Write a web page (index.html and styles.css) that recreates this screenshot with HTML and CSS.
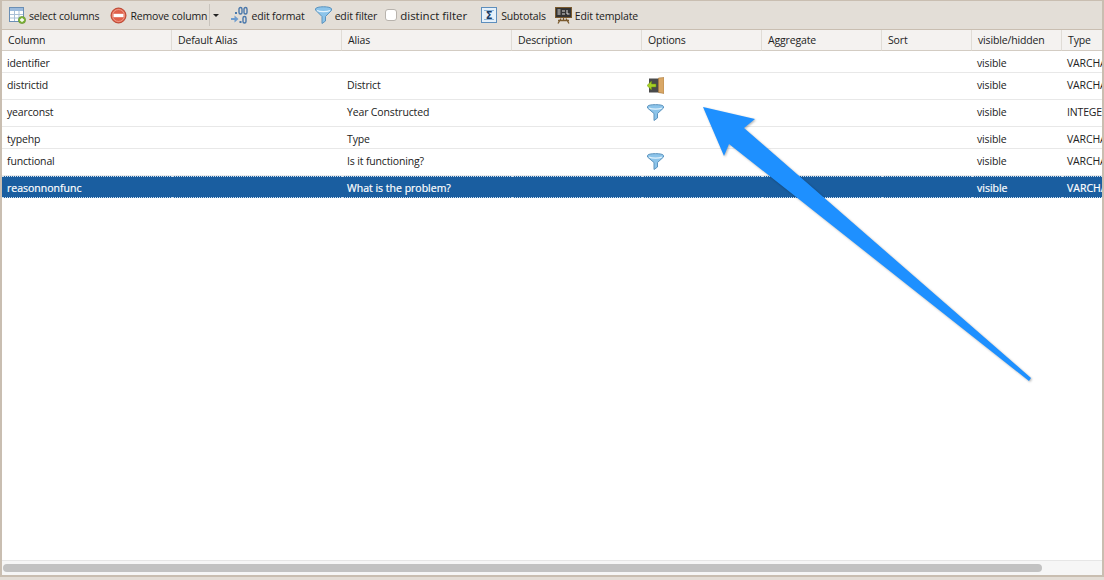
FILE: index.html
```html
<!DOCTYPE html>
<html lang="en">
<head>
    <meta charset="UTF-8">
    <title>Columns</title>
    <link rel="stylesheet" href="styles.css">
</head>
<body>

    <div class="frame">
        <div class="toolbar">
            <span class="tool tool-first">
                <svg class="icon" width="17" height="17" viewBox="0 0 17 17">
                    <rect x=".5" y=".5" width="14" height="14" fill="#fff" stroke="#6b8fb5"/>
                    <rect x="1" y="1" width="13" height="3" fill="#9dbbdc"/>
                    <path d="M1 7.500h13M1 11h13M5.500 4v10M10 4v10" stroke="#a9bfd6" fill="none"/>
                    <circle cx="13" cy="13" r="3.600" fill="#7fb53c" stroke="#5b8a22" stroke-width=".6"/>
                    <path d="M11 13h4M13 11v4" stroke="#fff" stroke-width="1.300"/>
                </svg>
                select columns
            </span>
            <span class="tool tool-remove">
                <svg class="icon" width="17" height="17" viewBox="0 0 17 17">
                    <circle cx="8.500" cy="8.500" r="7.500" fill="#e0604a" stroke="#b9442f"/>
                    <circle cx="8.500" cy="8.500" r="6" fill="none" stroke="#f0a898" stroke-width=".8"/>
                    <rect x="3.500" y="6.800" width="10" height="3.400" fill="#fff"/>
                </svg>
                Remove column
            </span>
            <span class="tool-split"><span class="caret"></span></span>
            <span class="tool tool-format">
                <svg class="icon" width="17" height="18" viewBox="0 0 17 18">
                    <rect x="8" y="1.500" width="3" height="6.500" rx="1.500" fill="none" stroke="#4a78ab" stroke-width="1.400"/>
                    <rect x="13" y="1.500" width="3" height="6.500" rx="1.500" fill="none" stroke="#4a78ab" stroke-width="1.400"/>
                    <rect x="12" y="10.500" width="3" height="6.500" rx="1.500" fill="none" stroke="#4a78ab" stroke-width="1.400"/>
                    <rect x="4" y="6" width="2" height="2" fill="#4a78ab"/>
                    <rect x="8.500" y="15" width="2" height="2" fill="#4a78ab"/>
                    <path d="M0 12h3.500V9.500l4 3.500-4 3.500V14H0z" fill="#6d9ccf"/>
                </svg>
                edit format
            </span>
            <span class="tool tool-filter">
                <svg class="icon" width="17" height="18" viewBox="0 0 17 18">
                    <path d="M.5 3c0-3 16-3 16 0v1.500l-6 6v4.500l-3.500 2.500v-7l-6.500-6.500z" fill="#8cc4ea" stroke="#5c93bd"/>
                    <path d="M2 4.500c3 1.500 10 1.500 13 0" stroke="#e4f3fc" stroke-width="1.200" fill="none"/>
                </svg>
                edit filter
            </span>
            <label class="tool tool-distinct"><span class="checkbox"></span>distinct filter</label>
            <span class="tool tool-subtotals">
                <svg class="icon" width="16" height="16" viewBox="0 0 16 16">
                    <rect x=".5" y=".5" width="15" height="15" fill="#e6f1fa" stroke="#5e8fbd"/>
                    <path d="M3 3.500h10M3 12.500h10" stroke="#8fb4d6"/>
                    <text class="sigma" x="8" y="11.500" text-anchor="middle">Σ</text>
                </svg>
                Subtotals
            </span>
            <span class="tool">
                <svg class="icon" width="17" height="17" viewBox="0 0 17 17">
                    <rect x=".5" y=".5" width="16" height="10" fill="#333" stroke="#7a5a2e"/>
                    <path d="M2.500 3h3M2.500 5h3M2.500 7h3M7 4h3M7 7h3M12 3v4h2.500" stroke="#eee" fill="none" stroke-width=".9"/>
                    <path d="M8.500 11v2M3 16.500l3-5M14 16.500l-3-5M3 13.500h11" stroke="#7a5a2e" fill="none" stroke-width="1.300"/>
                </svg>
                Edit template
            </span>
        </div>

        <div class="grid-area">
            <table class="columns">
                <colgroup>
                    <col class="w170"><col class="w170"><col class="w170"><col class="w130"><col class="w120"><col class="w120"><col class="w90"><col class="w90"><col class="w90">
                </colgroup>
                <thead>
                    <tr>
                        <th>Column</th><th>Default Alias</th><th>Alias</th><th>Description</th><th>Options</th><th>Aggregate</th><th>Sort</th><th>visible/hidden</th><th>Type</th>
                    </tr>
                </thead>
                <tbody>
                    <tr class="row-short">
                        <td>identifier</td><td></td><td></td><td></td><td></td><td></td><td></td><td>visible</td><td>VARCHAR</td>
                    </tr>
                    <tr class="row-tall">
                        <td>districtid</td><td></td><td>District</td><td></td>
                        <td class="cell-icon">
                            <svg width="17" height="17" viewBox="0 0 17 17">
                                <rect x="2" y="1.500" width="12" height="14" fill="#4a4a4a"/>
                                <path d="M11.500 1l5.500-.500V16.500l-5.500-1z" fill="#d9a766" stroke="#a87a3e" stroke-width=".6"/>
                                <path d="M0 8.500l4.500-4.500v3H9v3H4.500v3z" fill="#a6d024" stroke="#6b8f10" stroke-width=".5"/>
                            </svg>
                        </td>
                        <td></td><td></td><td>visible</td><td>VARCHAR</td>
                    </tr>
                    <tr class="row-tall">
                        <td>yearconst</td><td></td><td>Year Constructed</td><td></td>
                        <td class="cell-icon">
                            <svg width="17" height="17" viewBox="0 0 17 17">
                                <path d="M.5 2.500c0-2.500 16-2.500 16 0v1.500l-6 5.500v4.500l-3.500 2.500v-7L.5 4z" fill="#8cc4ea" stroke="#5c93bd"/>
                                <path d="M2 4c3 1.500 10 1.500 13 0" stroke="#e4f3fc" stroke-width="1.200" fill="none"/>
                            </svg>
                        </td>
                        <td></td><td></td><td>visible</td><td>INTEGER</td>
                    </tr>
                    <tr class="row-short">
                        <td>typehp</td><td></td><td>Type</td><td></td><td></td><td></td><td></td><td>visible</td><td>VARCHAR</td>
                    </tr>
                    <tr class="row-tall">
                        <td>functional</td><td></td><td>Is it functioning?</td><td></td>
                        <td class="cell-icon">
                            <svg width="17" height="17" viewBox="0 0 17 17">
                                <path d="M.5 2.500c0-2.500 16-2.500 16 0v1.500l-6 5.500v4.500l-3.500 2.500v-7L.5 4z" fill="#8cc4ea" stroke="#5c93bd"/>
                                <path d="M2 4c3 1.500 10 1.500 13 0" stroke="#e4f3fc" stroke-width="1.200" fill="none"/>
                            </svg>
                        </td>
                        <td></td><td></td><td>visible</td><td>VARCHAR</td>
                    </tr>
                    <tr class="row-selected">
                        <td>reasonnonfunc</td><td></td><td>What is the problem?</td><td></td><td></td><td></td><td></td><td>visible</td><td>VARCHAR</td>
                    </tr>
                </tbody>
            </table>
        </div>

        <div class="scrollbar"><div class="scroll-thumb"></div></div>
    </div>

    <svg class="arrow" width="1104" height="580" viewBox="0 0 1104 580">
        <path d="M703 107L755 119L744 128L1031 378L1029 381L729 144L724 156Z" fill="#1e90ff"/>
    </svg>

</body>
</html>
```

FILE: styles.css
```css
html, body {
    margin: 0;
    padding: 0;
}

body {
    width: 1104px;
    height: 580px;
    overflow: hidden;
    position: relative;
    background-color: #fff;
    color: #222;
    font-family: "Open Sans", "Liberation Sans", sans-serif;
    font-size: 10.5px;
    letter-spacing: -.15px;
}

.frame {
    box-sizing: border-box;
    height: 577px;
    display: flex;
    flex-direction: column;
    border-left: 2px solid #c9beb1;
    border-right: 2px solid #c9beb1;
    border-top: 1px solid #c9beb1;
    border-bottom: 2px solid #c9beb1;
    box-shadow: 0 3px 0 #e3ddd6;
}

.toolbar {
    box-sizing: border-box;
    height: 29px;
    flex: none;
    display: flex;
    align-items: center;
    padding: 2px 0 0 7px;
    background-color: #e3ded7;
    border-bottom: 1px solid #c9beb1;
    white-space: nowrap;
    color: #1c1c1c;
}

.tool {
    display: flex;
    align-items: center;
    gap: 3px;
}

.icon {
    margin-top: -2px;
}

.tool-remove { margin-left: 11px; gap: 3px; }
.tool-format { margin-left: 10px; }
.tool-filter { margin-left: 10px; }
.tool-distinct { margin: -2px 0 0 8px; gap: 0; font-size: 11.500px; letter-spacing: 0; }
.tool-subtotals { margin-left: 14px; gap: 4px; }
.tool-subtotals + .tool { margin-left: 9px; }

.tool-split {
    box-sizing: border-box;
    width: 12px;
    height: 22px;
    margin: -2px 0 0 2px;
    display: flex;
    align-items: center;
    justify-content: center;
    border-left: 1px solid #c9c4bd;
}

.caret {
    width: 0;
    height: 0;
    border-left: 3px solid transparent;
    border-right: 3px solid transparent;
    border-top: 3px solid #222;
}

.checkbox {
    box-sizing: border-box;
    width: 12px;
    height: 12px;
    margin-right: 3px;
    background-color: #fff;
    border: 1px solid #b8b3ad;
    border-radius: 3px;
}

.sigma {
    font-family: "DejaVu Sans", sans-serif;
    font-size: 10px;
    font-weight: bold;
    fill: #1a3c66;
}

.grid-area {
    flex: 1;
    min-height: 0;
    overflow: hidden;
    background-color: #fff;
}

.columns {
    table-layout: fixed;
    width: 1150px;
    border-collapse: separate;
    border-spacing: 0;
}

.w170 { width: 170px; }
.w130 { width: 130px; }
.w120 { width: 120px; }
.w90 { width: 90px; }

.columns th {
    box-sizing: border-box;
    height: 21px;
    padding: 0 6px;
    text-align: left;
    font-weight: normal;
    background-color: #f4f2f0;
    border-right: 1px solid #e0dcd6;
    border-bottom: 1px solid #d3ccc3;
}

.columns td {
    box-sizing: border-box;
    padding: 0 5px;
    white-space: nowrap;
    overflow: hidden;
    border-bottom: 1px solid #e8e8e8;
}

.row-short td { height: 22px; padding-top: 2px; }
.row-tall td { height: 27px; padding-bottom: 2px; }

.cell-icon svg {
    display: block;
}

.row-selected td {
    height: 22px;
    padding-top: 2px;
    color: #fff;
    letter-spacing: 0;
    -webkit-text-stroke: .2px #fff;
    background-color: #1a5ea0;
    border-top: 1px dotted #cfe0f0;
    border-bottom: 1px dotted #cfe0f0;
}

.scrollbar {
    box-sizing: border-box;
    flex: none;
    height: 15px;
    padding: 3px 0 0 1px;
    background-color: #f6f6f6;
    border-top: 1px solid #e6e6e6;
}

.scroll-thumb {
    width: 1039px;
    height: 8px;
    background-color: #c2c2c2;
    border-radius: 4px;
}

.arrow {
    position: absolute;
    left: 0;
    top: 0;
    filter: drop-shadow(1px 1px 1px rgba(0, 0, 0, .3));
}
```
